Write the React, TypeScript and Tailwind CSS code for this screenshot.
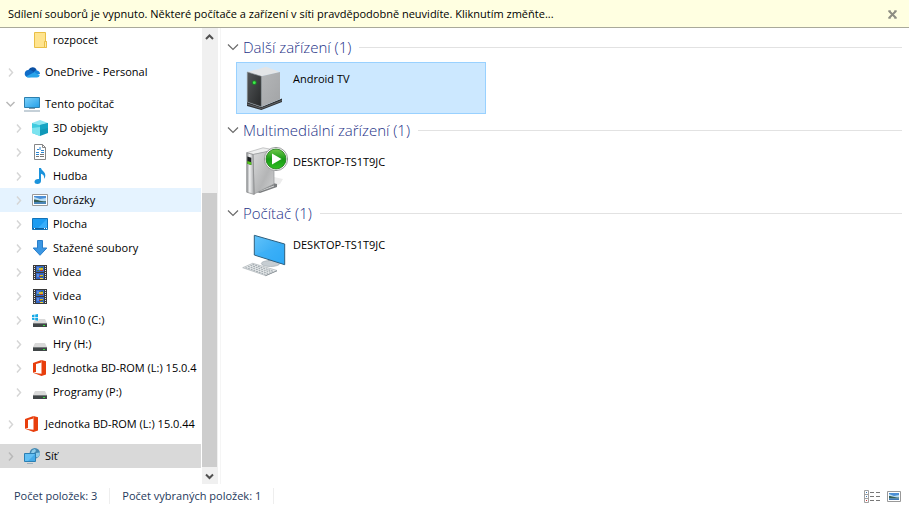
import { useState } from "react";
import type { ReactNode } from "react";

type TreeItem = {
  id: string;
  label: string;
  level: 1 | 2;
  icon: ReactNode;
  arrow?: "right" | "down";
  spaced?: boolean;
};

function FolderIcon() {
  return (
    <svg viewBox="0 0 16 16" className="size-4 shrink-0">
      <path d="M2.5.5h11v9h1v6h-12z" fill="#ffe48f" stroke="#e9bf46" />
      <path d="M12.500 9.500h2v6h-2z" fill="#ffe9a2" stroke="#e9bf46" />
    </svg>
  );
}

function OneDriveIcon() {
  return (
    <svg viewBox="0 0 16 16" className="size-4 shrink-0">
      <path d="M4.500 6a4.400 4.400 0 0 1 8.200.2L9 10z" fill="#0a4fa3" />
      <path d="M3.600 13.200A3.700 3.700 0 0 1 4.300 5.900c2-.3 3.300.7 6 2.400l-4 4.900z" fill="#0f6cc8" />
      <path d="M10 8c.8-1.600 2.200-2 3.200-1.500C15 7 16 8.400 16 10l-4 1z" fill="#1785dc" />
      <path d="M2 12.600l8.300-4.400 5.500 3.200a3 3 0 0 1-2.800 2H3.700c-.7 0-1.300-.3-1.700-.8z" fill="#28a4ea" />
    </svg>
  );
}

function PcIcon() {
  return (
    <svg viewBox="0 0 16 16" className="size-4 shrink-0">
      <defs>
        <linearGradient id="pc" x1="0" y1="0" x2="1" y2="1">
          <stop offset="0" stopColor="#7fd2fb" />
          <stop offset="1" stopColor="#239fe8" />
        </linearGradient>
      </defs>
      <path d="M.5 1.500h15v10H.5z" fill="url(#pc)" stroke="#2c7fae" />
      <path d="M5 12h6v1H5z" fill="#7d98aa" />
      <path d="M0 14.500h16v1H0z" fill="#8aa0b0" />
    </svg>
  );
}

function CubeIcon() {
  return (
    <svg viewBox="0 0 16 16" className="size-4 shrink-0">
      <path d="M0 3l8-3 8 3-8 2z" fill="#8ee6f2" />
      <path d="M0 3l8 2v11l-8-3z" fill="#3fcbdf" />
      <path d="M16 3L8 5v11l8-3z" fill="#1098b8" />
      <path d="M0 8l8-1v9l-8-3z" fill="#7ce3ef" />
      <path d="M8 5l8-2v5l-8 2z" fill="#15a5c4" />
    </svg>
  );
}

function DocumentIcon() {
  return (
    <svg viewBox="0 0 16 16" className="size-4 shrink-0">
      <path d="M2.500.5h8l3 3v12h-11z" fill="#fff" stroke="#868686" />
      <path d="M10.500.5v3h3" fill="none" stroke="#868686" />
      <path d="M5 5.500h2M8 3v3M4 8.500h3M9 6.500h3M9 8.500h3M4 10.500h3" stroke="#2f86cf" fill="none" />
      <path d="M8 10.500h4M4 12.500h3M8 12.500h4" stroke="#777" />
    </svg>
  );
}

function MusicIcon() {
  return (
    <svg viewBox="0 0 16 16" className="size-4 shrink-0">
      <path d="M7 0h2c.2 2.400 4.500 3.800 4.300 7.500 0 1.500-.6 2.500-1.300 3.300.5-2.400-.5-4.300-3-5V13c0 1.700-1.500 3-3.600 3C3.600 16 2.500 15 2.500 13.700c0-1.700 2-3 4.500-2.600z" fill="#1b93dc" />
    </svg>
  );
}

function PictureIcon() {
  return (
    <svg viewBox="0 0 16 16" className="size-4 shrink-0">
      <path d="M.5 2.500h15v11H.5z" fill="#fff" stroke="#999" />
      <path d="M2 4h12v8H2z" fill="#b9ddf3" />
      <path d="M2 4h12v2L8 7 2 5z" fill="#4b8fd6" />
      <path d="M2 7.500c3 .2 5 1.500 12 1.800V10H2z" fill="#365e55" />
      <path d="M2 10h12v2H2z" fill="#4a86b8" />
    </svg>
  );
}

function DesktopIcon() {
  return (
    <svg viewBox="0 0 16 16" className="size-4 shrink-0">
      <path d="M.5 2.500h15v11H.5z" fill="#1c9cf2" stroke="#1272b8" />
      <path d="M15 3v9L6 12z" fill="#38adfa" />
      <path d="M1 12h14v1H1z" fill="#0e5f9d" />
      <path d="M2 12h1v1H2zM12 12h1v1h-1zM14 12h1v1h-1z" fill="#fff" />
    </svg>
  );
}

function DownloadIcon() {
  return (
    <svg viewBox="0 0 16 16" className="size-4 shrink-0">
      <path d="M5.500.5h5v7.500h4.300L8 15.300 1.200 8h4.300z" fill="#3b97e3" stroke="#2a7fcb" />
    </svg>
  );
}

function VideoIcon() {
  return (
    <svg viewBox="0 0 16 16" className="size-4 shrink-0">
      <path d="M1 1h14v15H1z" fill="#3a3a3a" />
      <path d="M2.500 2v13M13.500 2v13" stroke="#e8e8e8" strokeDasharray="1 1" />
      <path d="M4 2h8v6H4zM4 9h8v6H4z" fill="#3566c4" />
      <path d="M5 3h2v3H5zM5 10h2v3H5z" fill="#5b8ce0" />
      <path d="M7 4h4v2H7zM8 11h3v1H8z" fill="#d9b92d" />
      <path d="M8 6h3v1H8zM7 12h2v1H7z" fill="#b0392f" />
      <path d="M5 6h2v1H5zM9 12h2v1H9zM9 3h2v1H9z" fill="#3f7a3f" />
      <path d="M8 14h3v1H8z" fill="#ecd43c" />
    </svg>
  );
}

function DriveIcon({ system = false }: { system?: boolean }) {
  return (
    <svg viewBox="0 0 16 16" className="size-4 shrink-0">
      <path d="M3 7h10l2 4H1z" fill="#d9d9d9" />
      <path d="M1 11h14v4H1z" fill="#404547" />
      <path d="M1 11h14v1H1z" fill="#777b7d" />
      <path d="M11 13h2v1h-2z" fill="#35e03b" />
      {system && (
        <>
          <path d="M0 1h6.500v7.500H0z" fill="#fff" />
          <path d="M0 3l2.500-.4V5H0zM3.200 2.500L6 2v3H3.200zM0 5.700h2.500V8L0 7.700zM3.200 5.700H6v3l-2.800-.5z" fill="#16a9e6" />
        </>
      )}
    </svg>
  );
}

function OfficeIcon() {
  return (
    <svg viewBox="0 0 16 16" className="size-4 shrink-0">
      <path d="M1 3L9.500 0v2.500L4 4v8l-3 .800z" fill="#e83e0c" />
      <path d="M9.500 0L14 1.300v13.200L9.500 16 1 12.800l8.500 1z" fill="#e83e0c" />
    </svg>
  );
}

function NetworkIcon() {
  return (
    <svg viewBox="0 0 16 16" className="size-4 shrink-0">
      <circle cx="10.800" cy="5.200" r="5.200" fill="#4389b3" />
      <path d="M8 2.500c1.500-1.500 2-1 3-1.500l1 2-2 2-3 0zM12 5l4-.5c0 2-1 4-2.500 5L12 9z" fill="#8ecbe8" />
      <path d="M.5 5.500h11v8H.5z" fill="#62bff3" stroke="#2b7fb3" />
      <path d="M11 6v7H4z" fill="#45abe9" />
      <path d="M3 15h6v1H3z" fill="#9db0bd" />
    </svg>
  );
}

function ServerIcon() {
  return (
    <svg viewBox="0 0 48 48" className="size-12 shrink-0">
      <defs>
        <linearGradient id="server-side" x1="0" y1="0" x2="1" y2="1">
          <stop offset="0" stopColor="#b4b6b8" />
          <stop offset="1" stopColor="#a2a4a6" />
        </linearGradient>
        <linearGradient id="server-front" x1="0" y1="0" x2="1" y2="1">
          <stop offset="0" stopColor="#55585a" />
          <stop offset="1" stopColor="#262829" />
        </linearGradient>
      </defs>
      <path d="M6 38l14.300 5L41 34.500V38l-20.700 8L6 42z" fill="#303335" />
      <path d="M6 40l14.300 4.500L41 36.500" stroke="#77797b" strokeWidth=".7" fill="none" />
      <path d="M6.300 8L25 2.800 39 8l-18.700 4.300z" fill="#e3e5e7" />
      <path d="M20.300 12.300L39 8v27.300l-18.700 7.400z" fill="url(#server-side)" />
      <path d="M6.300 8l14 4.300v30.400L6.300 38z" fill="url(#server-front)" stroke="#8b8e90" strokeWidth=".6" />
      <circle cx="13.300" cy="18.700" r="2.400" fill="#1f7e2a" />
      <circle cx="13.300" cy="18.700" r="1.400" fill="#3df04a" />
    </svg>
  );
}

function MediaServerIcon() {
  return (
    <svg viewBox="0 0 48 48" className="size-12 shrink-0">
      <defs>
        <linearGradient id="media-side" x1="0" y1="0" x2="1" y2="1">
          <stop offset="0" stopColor="#d9dadb" />
          <stop offset=".6" stopColor="#b4b5b6" />
          <stop offset="1" stopColor="#d0d1d2" />
        </linearGradient>
        <linearGradient id="media-front" x1="0" y1="0" x2="1" y2="0">
          <stop offset="0" stopColor="#8d8f91" />
          <stop offset=".4" stopColor="#f1f2f3" />
          <stop offset="1" stopColor="#9fa1a3" />
        </linearGradient>
        <linearGradient id="media-play" x1="0" y1="0" x2="0" y2="1">
          <stop offset="0" stopColor="#72c94d" />
          <stop offset=".5" stopColor="#179a16" />
          <stop offset="1" stopColor="#2fbf22" />
        </linearGradient>
      </defs>
      <path d="M33 30l9 2-3 5-7 4z" fill="#ececec" />
      <path d="M15 45l17-9 4 1v3l-17 6z" fill="#7c7e80" />
      <path d="M19 44l14-5" stroke="#d5d6d7" />
      <path d="M5.700 5.700L22 .8l13 2.400-22.500 4.300z" fill="#eeefef" stroke="#a5a6a8" strokeWidth=".6" />
      <path d="M12 7.500L33 3v34l-20 10z" fill="url(#media-side)" stroke="#949698" strokeWidth=".7" />
      <path d="M5.700 5.700L12 7.500l1.200 40-7.500-2.300z" fill="url(#media-front)" stroke="#86888a" strokeWidth=".7" />
      <path d="M6.300 9.500l4 1.200V18l-4-1.200z" fill="#1d2022" />
      <path d="M6.300 14l4 1.200V18l-4-1.200z" fill="#56c81e" />
      <circle cx="35" cy="12" r="11.600" fill="#fff" stroke="#8b8d8e" strokeWidth=".9" />
      <circle cx="35" cy="12" r="10" fill="url(#media-play)" stroke="#16750f" strokeWidth=".8" />
      <path d="M31 6.500v11l9.500-5.500z" fill="#fff" />
    </svg>
  );
}

function ComputerIcon() {
  return (
    <svg viewBox="0 0 48 48" className="size-12 shrink-0">
      <defs>
        <linearGradient id="screen" x1="0" y1="0" x2="1" y2="1">
          <stop offset="0" stopColor="#62c3fa" />
          <stop offset="1" stopColor="#1c9df0" />
        </linearGradient>
      </defs>
      <path d="M27 28l6 2v4h-6z" fill="#9aa5ad" />
      <ellipse cx="29.500" cy="33.500" rx="9.200" ry="3" fill="#c6cdd2" stroke="#98a2a9" strokeWidth=".6" />
      <path d="M13.300 5.300L43.700 14v20.700L13.300 25z" fill="url(#screen)" stroke="#2f5f7d" strokeWidth="1" />
      <path d="M43 14.500v19.300L14 24.500z" fill="#38aff8" opacity=".6" />
      <path d="M1.700 37.700l10-4.400L36 40.500 24.300 45.500z" fill="#e9eced" stroke="#a9b0b5" strokeWidth=".7" />
      <path d="M24.300 45.500L36 40.500v.8l-11.700 5z" fill="#7c858b" />
      <path d="M4.500 37.500l20 7M7 36.400l20 7M9.500 35.300l20 7M11.500 34.300l20.500 7" stroke="#a3abb0" strokeWidth="1.100" strokeDasharray="2 .8" />
    </svg>
  );
}

function ThumbnailsIcon() {
  return (
    <svg viewBox="0 0 16 16" className="size-4 shrink-0">
      <path d="M1.500 3.500h13v10h-13z" fill="#fff" stroke="#999" />
      <path d="M3 5h10v7H3z" fill="#b9ddf3" />
      <path d="M3 5h10v2L8 8 3 6z" fill="#4b8fd6" />
      <path d="M3 8c3 .2 5 1.300 10 1.500v1H3z" fill="#365e55" />
      <path d="M3 10.500h10V12H3z" fill="#3f79b5" />
    </svg>
  );
}

function Chevron({ direction, color }: { direction: "right" | "down"; color: string }) {
  return (
    <svg viewBox="0 0 16 16" className="size-4">
      <path
        d={direction === "right" ? "M7 4.500l3.500 4-3.500 4" : "M4.500 6l4 4 4-4"}
        fill="none"
        stroke={color}
        strokeWidth="1.500"
      />
    </svg>
  );
}

const tree: TreeItem[] = [
  { id: "rozpocet", label: "rozpocet", level: 2, icon: <FolderIcon /> },
  { id: "onedrive", label: "OneDrive - Personal", level: 1, icon: <OneDriveIcon />, arrow: "right", spaced: true },
  { id: "pc", label: "Tento počítač", level: 1, icon: <PcIcon />, arrow: "down", spaced: true },
  { id: "3d", label: "3D objekty", level: 2, icon: <CubeIcon />, arrow: "right" },
  { id: "dokumenty", label: "Dokumenty", level: 2, icon: <DocumentIcon />, arrow: "right" },
  { id: "hudba", label: "Hudba", level: 2, icon: <MusicIcon />, arrow: "right" },
  { id: "obrazky", label: "Obrázky", level: 2, icon: <PictureIcon />, arrow: "right" },
  { id: "plocha", label: "Plocha", level: 2, icon: <DesktopIcon />, arrow: "right" },
  { id: "stazene", label: "Stažené soubory", level: 2, icon: <DownloadIcon />, arrow: "right" },
  { id: "videa", label: "Videa", level: 2, icon: <VideoIcon />, arrow: "right" },
  { id: "videa2", label: "Videa", level: 2, icon: <VideoIcon />, arrow: "right" },
  { id: "win10", label: "Win10 (C:)", level: 2, icon: <DriveIcon system />, arrow: "right" },
  { id: "hry", label: "Hry (H:)", level: 2, icon: <DriveIcon />, arrow: "right" },
  { id: "bdrom", label: "Jednotka BD-ROM (L:) 15.0.4", level: 2, icon: <OfficeIcon />, arrow: "right" },
  { id: "programy", label: "Programy (P:)", level: 2, icon: <DriveIcon />, arrow: "right" },
  { id: "bdrom2", label: "Jednotka BD-ROM (L:) 15.0.44", level: 1, icon: <OfficeIcon />, arrow: "right", spaced: true },
  { id: "sit", label: "Síť", level: 1, icon: <NetworkIcon />, arrow: "right", spaced: true },
];

const groups = [
  { id: "other", title: "Další zařízení (1)", device: "Android TV", icon: <ServerIcon /> },
  { id: "media", title: "Multimediální zařízení (1)", device: "DESKTOP-TS1T9JC", icon: <MediaServerIcon /> },
  { id: "computer", title: "Počítač (1)", device: "DESKTOP-TS1T9JC", icon: <ComputerIcon /> },
];

function TreeRow({ item }: { item: TreeItem }) {
  let background = "";
  if (item.id === "sit") background = "bg-[#d9d9d9]";
  if (item.id === "obrazky") background = "bg-[#e5f3ff]";

  const arrowColor = item.id === "sit" || item.arrow === "down" ? "#b8b8b8" : "#d6d6d6";

  return (
    <li className={`flex h-6 items-center overflow-hidden ${item.level === 1 ? "pl-0.5" : "pl-2.5"} ${item.spaced ? "mt-2" : ""} ${background}`}>
      {item.arrow ? (
        <button type="button" aria-label={`Rozbalit ${item.label}`} className="mr-1.5 size-4 shrink-0">
          <Chevron direction={item.arrow} color={arrowColor} />
        </button>
      ) : (
        <span className="mr-1.5 size-4 shrink-0" />
      )}
      <a href={`#${item.id}`} className="flex items-center gap-[5px] whitespace-nowrap">
        {item.icon}
        {item.label}
      </a>
    </li>
  );
}

export default function App() {
  const [selected, setSelected] = useState("other");
  const [showBanner, setShowBanner] = useState(true);

  return (
    <div className="flex min-h-screen flex-col bg-white font-['Open_Sans','Noto_Sans',sans-serif] text-[11px] leading-4 text-black">
      {showBanner && (
        <div className="flex h-7 shrink-0 items-center justify-between border-b border-[#a9a99a] bg-[#ffffe1] px-2">
          <button type="button" className="truncate text-left">
            Sdílení souborů je vypnuto. Některé počítače a zařízení v síti pravděpodobně neuvidíte. Kliknutím změňte...
          </button>
          <button type="button" aria-label="Zavřít" onClick={() => setShowBanner(false)} className="size-4 shrink-0">
            <svg viewBox="0 0 16 16" className="size-4">
              <path d="M4 5l7 7M11 5l-7 7" stroke="#8d8d82" strokeWidth="2" />
              <path d="M3 5h3M9 5h3M3 12h3M9 12h3" stroke="#8d8d82" />
            </svg>
          </button>
        </div>
      )}

      <div className="flex grow">
        {/* Navigation pane */}
        <nav className="w-[201px] shrink-0 pb-4">
          <ul>
            {tree.map((item) => (
              <TreeRow key={item.id} item={item} />
            ))}
          </ul>
        </nav>

        {/* Scrollbar */}
        <div className="ml-px flex w-4 shrink-0 flex-col bg-[#f0f0f0]">
          <button type="button" aria-label="Nahoru" className="flex h-[17px] items-center justify-center">
            <svg viewBox="0 0 16 16" className="size-4">
              <path d="M4 10l3.500-3.500L11 10" fill="none" stroke="#505050" strokeWidth="2" />
            </svg>
          </button>
          <div className="flex grow flex-col justify-end">
            <div className="mr-px h-[65%] bg-[#cdcdcd]" />
          </div>
          <button type="button" aria-label="Dolů" className="flex h-[17px] items-center justify-center">
            <svg viewBox="0 0 16 16" className="size-4">
              <path d="M4 6.500L7.500 10 11 6.500" fill="none" stroke="#505050" strokeWidth="2" />
            </svg>
          </button>
        </div>

        {/* Device list */}
        <main className="ml-0.5 min-w-0 grow border-l border-[#f5f5f5] pt-1 pr-[7px] pl-1.5">
          {groups.map((group) => (
            <section key={group.id} className="mb-px">
              <h2 className="flex h-[30px] items-center text-[15px] leading-5 font-light text-[#1e3287]">
                <button type="button" className="flex items-center gap-1 whitespace-nowrap">
                  <svg viewBox="0 0 12 12" className="size-3">
                    <path d="M1 3.500l5 5 5-5" fill="none" stroke="#6b6b6b" strokeWidth="1.200" />
                  </svg>
                  {group.title}
                </button>
                <span className="ml-2 h-px grow bg-[#e2e2e2]" />
              </h2>
              <button
                type="button"
                onClick={() => setSelected(group.id)}
                className={`ml-[9px] flex h-[52px] w-[250px] items-start gap-1 border pt-px pl-1 text-left ${selected === group.id ? "border-[#99d1ff] bg-[#cce8ff]" : "border-transparent"}`}
              >
                {group.icon}
                <span className="pt-[7px]">{group.device}</span>
              </button>
            </section>
          ))}
        </main>
      </div>

      {/* Status bar */}
      <footer className="flex h-[23px] shrink-0 items-center pr-[7px] pl-3.5 text-[#1e395b]">
        <span className="border-r border-[#eeeeee] pr-3">Počet položek: 3</span>
        <span className="border-r border-[#eeeeee] px-3">Počet vybraných položek: 1</span>
        <div className="ml-auto flex items-center gap-1.5">
          <button type="button" aria-label="Podrobnosti" className="size-4">
            <svg viewBox="0 0 16 16" className="size-4">
              <path d="M.5 2.500h4v12h-4zM.5 6.500h4M.5 10.500h4" fill="#fff" stroke="#a0a0a0" />
              <path d="M6 4.500h4M12 4.500h4M6 8.500h4M12 8.500h4M6 12.500h4M12 12.500h4" stroke="#777" />
              <path d="M2 4h1v1H2zM2 8h1v1H2z" fill="#3a78b5" />
              <path d="M2 12h1v1H2z" fill="#c33" />
            </svg>
          </button>
          <button type="button" aria-label="Velké ikony" className="size-4">
            <ThumbnailsIcon />
          </button>
        </div>
      </footer>
    </div>
  );
}
